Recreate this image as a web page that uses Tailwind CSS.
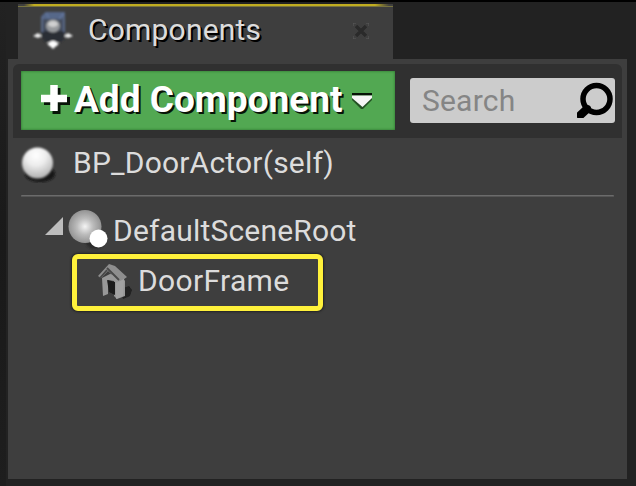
<!DOCTYPE html>
<html lang="en">
<head>
<meta charset="utf-8">
<title>Components</title>
<script src="https://cdn.jsdelivr.net/npm/@tailwindcss/browser@4"></script>
</head>
<body class="h-[486px] w-[636px] overflow-hidden bg-[#222222] font-['Roboto',sans-serif] text-[30px] tracking-[0.2px] text-[#dcdcdc]">
<div class="flex h-[486px] w-[636px] border-t-2 border-black">
  <div class="w-1.5 shrink-0 bg-gradient-to-b from-[#222] via-[#191919] to-[#1e1e1e]"></div>
  <div class="ml-0.5 w-[619px]">
    <header class="ml-2.5 flex h-[57px] w-[375px] flex-col bg-[#3e3e3e]">
      <div class="h-0.5 bg-[#222]"></div>
      <div class="h-[3px] border-b border-[#77733f] bg-[linear-gradient(90deg,#3e3e3e_6px,#c1ad20_16px,#c1ad20_357px,#3e3e3e_371px)]"></div>
      <div class="flex h-[47px] items-center pl-[14px]">
        <svg class="h-[42px] w-[42px] shrink-0" viewBox="0 0 42 42">
          <defs>
            <filter id="soft"><feGaussianBlur stdDeviation=".8"/></filter>
            <filter id="soft2"><feGaussianBlur stdDeviation=".6"/></filter>
          </defs>
          <g filter="url(#soft)">
            <path d="M9 6L13 2H33V26L30 31H13L9 26Z" fill="#454d5d"/>
            <path d="M9 7L14 2H33L30 9H11Z" fill="#566889"/>
            <path d="M10 7V22M32 4V25M14 3L17 8M27 9L32 3" stroke="#64779d" stroke-width="1.300" fill="none"/>
            <path d="M8 25L12 21H31L35 26L29 32H13Z" fill="#2b2e35"/>
            <ellipse cx="21" cy="16" rx="7" ry="6.500" fill="#96999c"/>
            <ellipse cx="21" cy="14" rx="5" ry="3" fill="#d0d0d0"/>
            <path d="M1 26L6 23L10 26L6 28ZM41 26L36 23L32 26L36 28Z" fill="#f0f0f0"/>
            <path d="M19 31H23V33H27L21 39L15 33H19Z" fill="#fff"/>
            <ellipse cx="21" cy="34" rx="5" ry="2.500" fill="#fff"/>
          </g>
        </svg>
        <span class="-mt-[2px] ml-[14px] whitespace-nowrap [text-shadow:2px_2px_0_#000]">Components</span>
        <svg class="ml-auto mr-[24px] h-4 w-4" viewBox="0 0 16 16"><path d="M0 3V0H3M13 0H16V3M16 13V16H13M3 16H0V13" stroke="#5a5a5a" fill="none"/><path d="M3 3L13 13M13 3L3 13" stroke="#2b2b2b" stroke-width="3.500" filter="url(#soft2)"/></svg>
      </div>
    </header>
    <main class="h-[420px] w-[619px] bg-[#3e3e3e] px-[5px] pt-[5px]">
      <div class="flex h-[74px] rounded-t-md bg-[#303030] pl-2 pt-[7px]">
        <button class="flex h-[59px] w-[374px] items-center bg-[#52a852] pl-5 text-[37px] font-bold tracking-normal text-white shadow-[inset_0_0_3px_#276f28]">
          <svg class="-mt-[2px] h-[30px] w-[29px] shrink-0" viewBox="0 0 29 30"><path d="M15.500 3V29M3 16H29" stroke="#071407" stroke-width="8"/><path d="M13 0V26M0 13.500H26" stroke="white" stroke-width="7.500"/></svg>
          <span class="-mt-[2px] ml-[4px] whitespace-nowrap leading-[58px] [text-shadow:2px_2px_0_#071407]">Add Component</span>
          <svg class="ml-auto mr-[22px] h-[17px] w-[21px] shrink-0" viewBox="0 0 21 17"><path d="M0 3H20V8L11 17L9 17L0 8Z" fill="#225022"/><path d="M0 3.500H20V6L10.500 15L0 6Z" fill="#f5f5f5"/><path d="M0 2H20" stroke="#061206" stroke-width="2"/></svg>
        </button>
        <label class="ml-[15px] mt-[7px] flex h-[45px] w-[205px] items-center rounded-[3px] bg-[#cccccc] pl-3 text-[#858585]">
          <span>Search</span>
          <svg class="ml-auto mr-[1px] h-[40px] w-[40px]" viewBox="0 0 40 40"><g fill="none" stroke="#050505" filter="url(#soft2)"><circle cx="22.500" cy="18" r="13.500" stroke-width="5.500"/><path d="M13 28L6.500 34" stroke-width="8.500" stroke-linecap="round"/></g></svg>
        </label>
      </div>
      <div class="flex h-[57px] items-center pl-[4px] pb-[7px]">
        <svg class="-mt-[1px] h-[40px] w-[42px] shrink-0" viewBox="0 0 42 40"><defs><radialGradient id="ball" cx=".45" cy=".25" r=".8"><stop stop-color="#fff"/><stop offset=".4" stop-color="#eee"/><stop offset="1" stop-color="#aaa"/></radialGradient></defs><ellipse cx="23" cy="31" rx="15" ry="8" fill="#151515" filter="url(#soft)"/><circle cx="20.500" cy="20" r="15.500" fill="url(#ball)" filter="url(#soft)"/></svg>
        <span class="-mt-[2px] ml-[14px] whitespace-nowrap">BP_DoorActor(self)</span>
      </div>
      <div class="mx-2 h-0.5 rounded-full border-b border-[#555] bg-[#6b6b6b]"></div>
      <div class="flex h-[57px] items-center pl-8 pt-[11px]">
        <svg class="-mt-[10px] h-[18px] w-[18px] shrink-0" viewBox="0 0 18 18"><path d="M18 0V18H0Z" fill="#bdbdbd"/></svg>
        <svg class="-mt-[2px] ml-[5px] h-[42px] w-[42px] shrink-0" viewBox="0 0 42 42"><defs><radialGradient id="root"><stop stop-color="#f4f4f4"/><stop offset=".5" stop-color="#bbb"/><stop offset="1" stop-color="#939393"/></radialGradient></defs><ellipse cx="27" cy="34" rx="9" ry="6" fill="#2a2a2a" filter="url(#soft)"/><circle cx="17" cy="17.500" r="16.500" fill="url(#root)" filter="url(#soft2)"/><circle cx="30.500" cy="29.500" r="9" fill="#fff" filter="url(#soft2)"/></svg>
        <span class="-mt-[2px] ml-[3px] whitespace-nowrap">DefaultSceneRoot</span>
      </div>
      <div class="ml-[59px] flex h-[57px] w-[251px] items-center rounded-md border-5 border-[#fff13b] pb-[3px] pl-[18px] shadow-[0_0_2px_1px_#222]">
        <svg class="h-[40px] w-[40px] shrink-0" viewBox="0 0 40 40"><g filter="url(#soft2)"><path d="M25 28L34 25L37 29L35 35L28 38Z" fill="#202020"/><path d="M7 17L15 13L27 15L30 20V35L22 38L19 35V20L13 19V33L8 35Z" fill="#989898"/><path d="M12 19L20 21V34L14 31Z" fill="#1b1b1b"/><path d="M14 3L3 15L6 17L13 10L25 21L32 16L20 5Z" fill="#8e8e8e"/><path d="M12 7L24 19M12 9L5 17" stroke="#484848" stroke-width="1.800"/><path d="M21 22L29 18L28 35L21 38Z" fill="#a2a2a2"/></g></svg>
        <span class="-mt-[2px] ml-[3px] whitespace-nowrap tracking-[0.35px]">DoorFrame</span>
      </div>
    </main>
  </div>
</div>
</body>
</html>
